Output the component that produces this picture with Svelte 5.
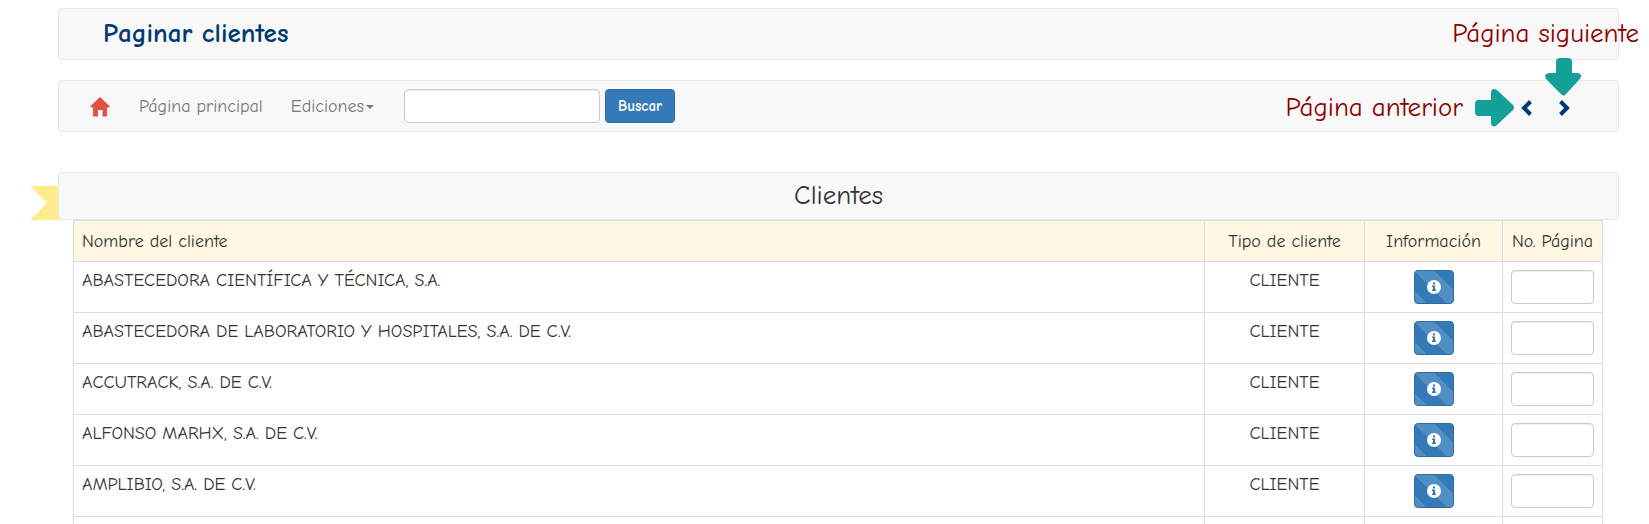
<script>
  const clientes = [
    { nombre: 'ABASTECEDORA CIENTÍFICA Y TÉCNICA, S.A.', tipo: 'CLIENTE' },
    { nombre: 'ABASTECEDORA DE LABORATORIO Y HOSPITALES, S.A. DE C.V.', tipo: 'CLIENTE' },
    { nombre: 'ACCUTRACK, S.A. DE C.V.', tipo: 'CLIENTE' },
    { nombre: 'ALFONSO MARHX, S.A. DE C.V.', tipo: 'CLIENTE' },
    { nombre: 'AMPLIBIO, S.A. DE C.V.', tipo: 'CLIENTE' }
  ];
  let busqueda = $state('');
</script>

<div class="page">
  <header class="bar title-bar">
    <h1>Paginar clientes</h1>
    <span class="note note-next">Página siguiente</span>
  </header>

  <nav class="bar nav-bar">
    <a class="home" href="#inicio" aria-label="Inicio">
      <svg width="20" height="20" viewBox="0 0 20 20"><path fill="#df5145" d="M10 0 20 9.5 18.600 10.500H17V19.500H12.500V13H8V19.500H3V10.500H1.400L0 9.500Z" /></svg>
    </a>
    <a class="link" href="#principal">Página principal</a>
    <button class="link menu" type="button">Ediciones<span class="caret"></span></button>
    <form onsubmit={(e) => e.preventDefault()}>
      <input class="field search" type="text" aria-label="Buscar cliente" bind:value={busqueda} />
      <button class="btn" type="submit">Buscar</button>
    </form>
    <div class="pager">
      <span class="note">Página anterior</span>
      <svg class="arrow-right" width="40" height="38" viewBox="0 0 40 38"><path fill="#14a098" d="M4 11H16V4Q16 0 19 0Q21 0 23 2L38 16Q40 18.500 38 21L22 36Q20 38 18 37.500Q16 37 16 34V27H4Q0 27 0 23V15Q0 11 4 11Z" /></svg>
      <a class="prev" href="#anterior" aria-label="Página anterior">
        <svg width="12" height="16" viewBox="0 0 12 16"><path fill="none" stroke="#003a70" stroke-width="4" d="M9.500 1.500 3 8 9.500 14.500" /></svg>
      </a>
      <a class="next" href="#siguiente" aria-label="Página siguiente">
        <svg width="12" height="16" viewBox="0 0 12 16"><path fill="none" stroke="#003a70" stroke-width="4" d="M2.500 1.500 9 8 2.500 14.500" /></svg>
        <svg class="arrow-down" width="36" height="38" viewBox="0 0 36 38"><path fill="#14a098" d="M11 4Q11 0 15 0H23Q27 0 27 4V15H33Q36 15.500 36 18Q36 20 34 22L21 36Q18.500 39 16 36L2 22Q0 20 0 18Q0.500 15.500 4 15H11Z" /></svg>
      </a>
    </div>
  </nav>

  <main>
    <div class="heading">
      <svg class="ribbon" width="31" height="34" viewBox="0 0 31 34"><path fill="#ffec8e" d="M0 0H31V34H0L17 17Z" /></svg>
      <h2 class="bar">Clientes</h2>
    </div>
    <div class="table-wrap">
      <table>
        <thead>
          <tr>
            <th class="name">Nombre del cliente</th>
            <th class="type">Tipo de cliente</th>
            <th class="info">Información</th>
            <th class="number">No. Página</th>
          </tr>
        </thead>
        <tbody>
          {#each clientes as cliente}
            <tr>
              <td class="name">{cliente.nombre}</td>
              <td>{cliente.tipo}</td>
              <td>
                <button class="btn striped" type="button" aria-label="Información de {cliente.nombre}">
                  <svg width="14" height="14" viewBox="0 0 14 14"><circle cx="7" cy="7" r="7" fill="#fff" /><path fill="#337ab7" d="M6 2.500H8V4.500H6ZM5 5.500H8V9.500H9V11H5V9.500H6V7H5Z" /></svg>
                </button>
              </td>
              <td><input class="field" type="text" aria-label="No. Página de {cliente.nombre}" /></td>
            </tr>
          {/each}
          <tr class="blank"><td></td><td></td><td></td><td></td></tr>
        </tbody>
      </table>
    </div>
  </main>
</div>

<style>
  :global(body) {
    background: #fefefe;
  }
  .page,
  .page * {
    box-sizing: border-box;
  }
  .page {
    height: 100vh;
    overflow: hidden;
    padding: 8px 30px 0 58px;
    font-family: "Comic Sans MS", "Comic Neue", Lato, sans-serif;
    font-size: 18px;
    line-height: 22px;
    color: #333;
  }
  .bar {
    background: #f8f8f8;
    border: 1px solid #e7e7e7;
    border-radius: 4px;
  }
  .title-bar,
  .nav-bar {
    display: flex;
    align-items: center;
    min-height: 52px;
    margin-bottom: 20px;
  }
  .title-bar {
    position: relative;
    padding-left: 44px;
  }
  h1 {
    margin: 0;
    font-size: 27px;
    line-height: 32px;
    font-weight: 700;
    color: #003a70;
  }
  .note {
    font-size: 27px;
    line-height: 32px;
    color: #8b0000;
    white-space: nowrap;
  }
  .note-next {
    position: absolute;
    right: -21px;
    top: 9px;
  }
  .nav-bar {
    padding: 0 48px 0 31px;
    margin-bottom: 40px;
  }
  .home {
    display: flex;
    padding-top: 2px;
    margin-right: 29px;
  }
  .link {
    padding: 2px 0 0;
    border: 0;
    background: none;
    font: inherit;
    color: #777;
    text-decoration: none;
    white-space: nowrap;
  }
  .menu {
    display: flex;
    align-items: center;
    margin: 0 30px 0 28px;
  }
  .caret {
    margin-left: 2px;
    border: 4px solid transparent;
    border-top-color: #777;
    border-bottom: 0;
  }
  form {
    display: flex;
    gap: 5px;
  }
  .field {
    display: block;
    width: 100%;
    height: 34px;
    padding: 6px 12px;
    border: 1px solid #ccc;
    border-radius: 4px;
    background: #fff;
    box-shadow: inset 0 1px 1px rgba(0, 0, 0, 0.075);
    font: inherit;
    color: #555;
  }
  .search {
    width: 196px;
  }
  .btn {
    height: 34px;
    padding: 0 12px;
    border: 1px solid #2e6da4;
    border-radius: 4px;
    background-color: #337ab7;
    color: #fff;
    font: inherit;
    font-size: 15px;
    font-weight: 700;
  }
  .pager {
    display: flex;
    align-items: center;
    margin-left: auto;
    padding-top: 4px;
  }
  .arrow-right {
    margin: 0 6px 0 12px;
  }
  .prev,
  .next {
    display: flex;
  }
  .next {
    position: relative;
    margin-left: 25px;
  }
  .arrow-down {
    position: absolute;
    left: -13px;
    bottom: 20px;
  }
  .heading {
    position: relative;
  }
  .ribbon {
    position: absolute;
    left: -28px;
    bottom: 0;
  }
  h2 {
    position: relative;
    margin: 0;
    padding: 7px 0;
    font-size: 27px;
    line-height: 32px;
    font-weight: 400;
    text-align: center;
  }
  .table-wrap {
    padding: 0 16px 0 15px;
  }
  table {
    width: 100%;
    border-collapse: collapse;
    table-layout: fixed;
  }
  th,
  td {
    padding: 8px;
    border: 1px solid #ddd;
    text-align: center;
    vertical-align: top;
  }
  th {
    padding: 10px 0 8px;
    background: #fdf7e3;
    font-weight: 400;
    white-space: nowrap;
  }
  th.name,
  td.name {
    padding-left: 8px;
    text-align: left;
  }
  .type {
    width: 160px;
  }
  .info {
    width: 138px;
  }
  .number {
    width: 100px;
  }
  .striped {
    display: block;
    width: 40px;
    margin: 0 auto;
    background-image: linear-gradient(45deg, rgba(255, 255, 255, 0.15) 25%, transparent 25%, transparent 50%, rgba(255, 255, 255, 0.15) 50%, rgba(255, 255, 255, 0.15) 75%, transparent 75%);
    background-size: 40px 40px;
  }
  .striped svg {
    display: block;
  }
  .blank td {
    height: 51px;
  }
</style>
